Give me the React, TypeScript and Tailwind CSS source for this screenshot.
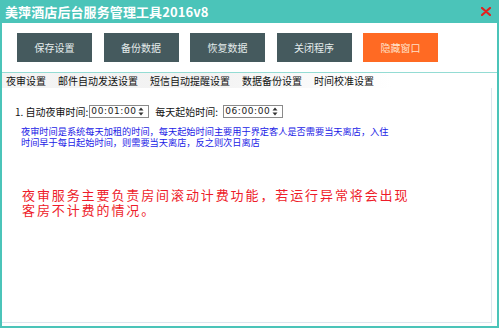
import React from "react";

const cjk = { fontFamily: '"Noto Sans CJK SC", "Noto Sans", sans-serif' };

function Spin() {
  return (
    <svg width="6" height="9" viewBox="0 0 6 9" className="mr-[4px]">
      <path d="M3 0.5 L5.5 3.5 L0.5 3.5 Z" fill="#333" />
      <path d="M3 8.5 L5.5 5.5 L0.5 5.5 Z" fill="#333" />
    </svg>
  );
}

function TimeBox({ value }: { value: string }) {
  return (
    <div className="flex h-[13px] w-[60px] items-center justify-between border border-[#8a8a8a] bg-white">
      <span
        className="pl-[1px] text-[9px] leading-[11px] tracking-[0.6px] text-[#222]"
        style={{ fontFamily: '"DejaVu Sans", sans-serif' }}
      >
        {value}
      </span>
      <Spin />
    </div>
  );
}

export default function App() {
  const buttons = ["保存设置", "备份数据", "恢复数据", "关闭程序"];
  const tabs = ["夜审设置", "邮件自动发送设置", "短信自动提醒设置", "数据备份设置", "时间校准设置"];
  return (
    <div className="flex h-[328px] w-[499px] flex-col bg-[#4bc4b9] px-[2px] pb-[2px]" style={cjk}>
      <div className="flex h-[23px] items-center justify-between pl-[3px] pr-[6px]">
        <span className="text-[13px] font-bold leading-[14px] tracking-[0.1px] text-white">美萍酒店后台服务管理工具2016v8</span>
        <svg width="10" height="9" viewBox="0 0 10 9">
          <path d="M1 1 L9 8 M9 1 L1 8" stroke="#e3211f" strokeWidth="2.2" strokeLinecap="round" />
        </svg>
      </div>
      <div className="flex flex-1 flex-col bg-white">
        <div className="flex gap-[11.5px] pl-[15px] pt-[10px]">
          {buttons.map((b) => (
            <div
              key={b}
              className="flex h-[29px] w-[75px] items-center justify-center bg-[#455a5e] text-[10px] text-[#e4ecec]"
            >
              {b}
            </div>
          ))}
          <div className="flex h-[29px] w-[75px] items-center justify-center bg-[#ff6a23] text-[10px] text-[#ffe0c8]">
            隐藏窗口
          </div>
        </div>
        <div className="mt-[10px] h-[1px] bg-[#94dcd4]" />
        <div className="flex h-[15px] w-[390px] items-center gap-[12px] bg-gradient-to-r from-[#f4f4f4] via-[#f2f2f2] to-white pl-[4px] text-[10px] leading-[12px] text-[#111]">
          {tabs.map((t) => (
            <span key={t}>{t}</span>
          ))}
        </div>
        <div className="mb-[3px] mr-[5px] flex flex-1 flex-col border-b border-r border-[#dde5ee]">
          <div className="mt-[17px] flex h-[13px] items-center pl-[13px] text-[10px] text-[#111]">
            <span className="mr-[1px]">1. 自动夜审时间:</span>
            <TimeBox value="00:01:00" />
            <span className="ml-[6px] mr-[5px]">每天起始时间:</span>
            <TimeBox value="06:00:00" />
          </div>
          <div className="mt-[8px] pl-[19px] text-[9.2px] leading-[11px] text-[#1a1ae6]">
            <div>夜审时间是系统每天加租的时间，每天起始时间主要用于界定客人是否需要当天离店，入住</div>
            <div>时间早于每日起始时间，则需要当天离店，反之则次日离店</div>
          </div>
          <div className="mt-[40px] pl-[20px] text-[13px] leading-[14.5px] tracking-[1.9px] text-[#ee1c2a]">
            <div>夜审服务主要负责房间滚动计费功能，若运行异常将会出现</div>
            <div>客房不计费的情况。</div>
          </div>
        </div>
      </div>
    </div>
  );
}
